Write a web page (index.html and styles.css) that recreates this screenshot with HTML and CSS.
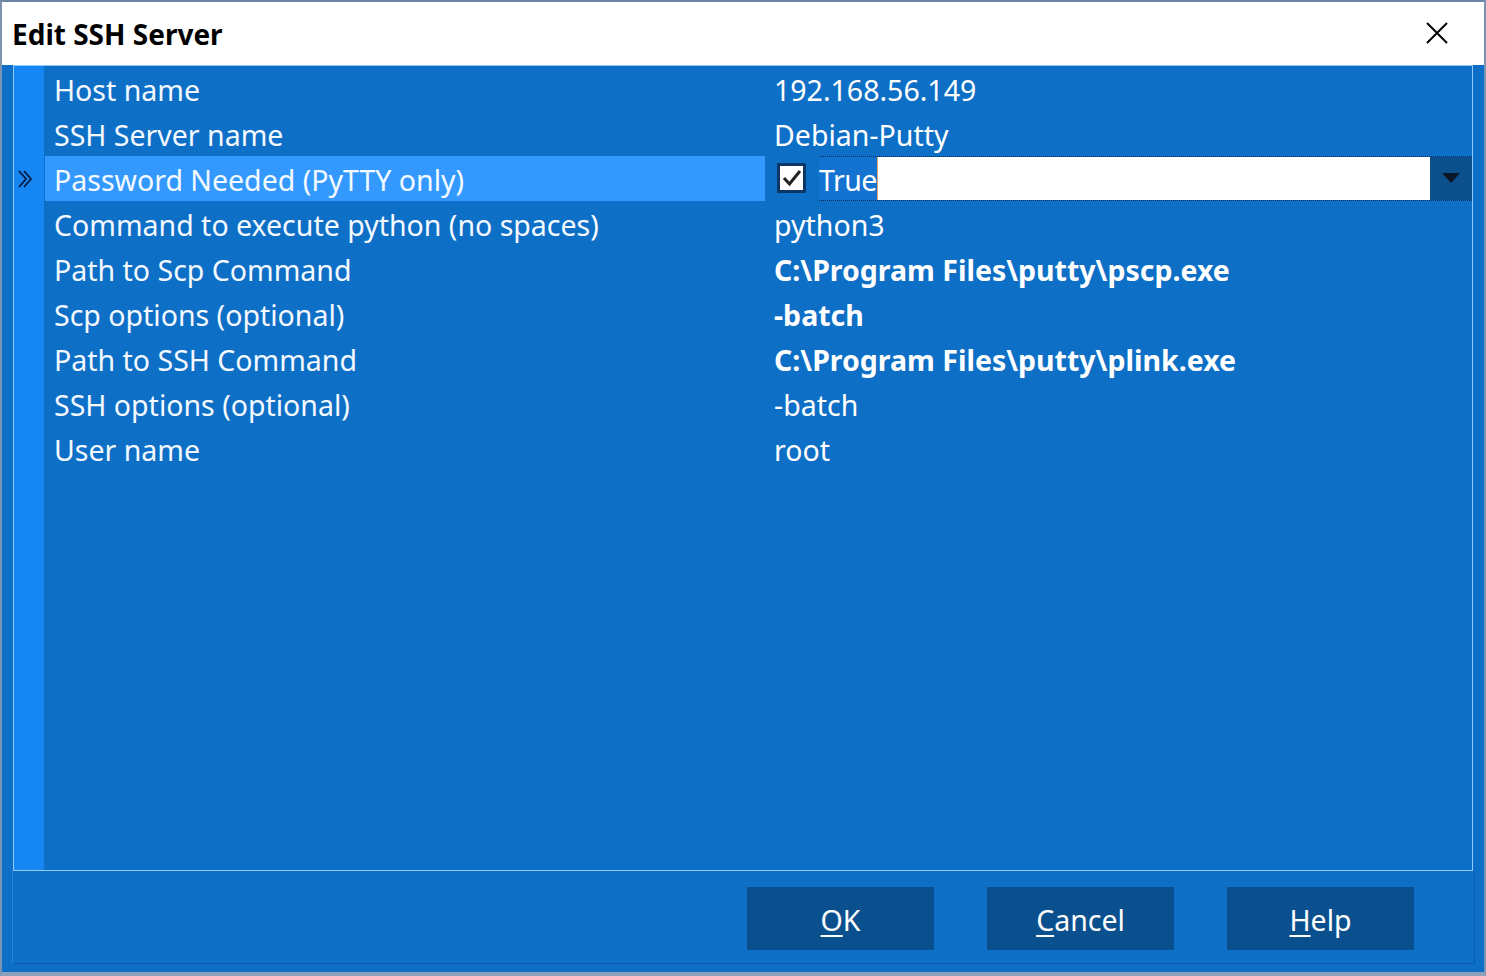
FILE: index.html
```html
<!DOCTYPE html>
<html lang="en">
<head>
<meta charset="utf-8">
<title>Edit SSH Server</title>
<link rel="stylesheet" href="styles.css">
</head>
<body>
<div class="window">
  <div class="titlebar">
    <h1 class="title">Edit SSH Server</h1>
    <button class="close" aria-label="Close">
      <svg width="22" height="22" viewBox="0 0 22 22"><path d="M1 1 L21 21 M21 1 L1 21" stroke="#000" stroke-width="2" fill="none"/></svg>
    </button>
  </div>
  <div class="body">
    <div class="grid">
      <div class="strip">
        <div class="strip-cell"></div>
        <div class="strip-cell"></div>
        <div class="strip-cell current">
          <svg width="16" height="18" viewBox="0 0 16 18"><path d="M1 1 L8 9 L1 17 M6 1 L13 9 L6 17" stroke="#081a3f" stroke-width="1.8" fill="none"/></svg>
        </div>
      </div>
      <div class="rows">
        <div class="row"><div class="label">Host name</div><div class="value">192.168.56.149</div></div>
        <div class="row"><div class="label">SSH Server name</div><div class="value">Debian-Putty</div></div>
        <div class="row selected">
          <div class="label">Password Needed (PyTTY only)</div>
          <div class="value editor-cell">
            <span class="checkbox">
              <svg width="22" height="22" viewBox="0 0 22 22"><path d="M3 11 L8.5 17 L19 4" stroke="#222" stroke-width="3" fill="none"/></svg>
            </span>
            <div class="editor">
              <span class="editor-text">True</span>
              <span class="editor-input"></span>
              <span class="editor-drop">
                <svg width="18" height="10" viewBox="0 0 18 10"><path d="M0 0 L18 0 L9 10 Z" fill="#0b1626"/></svg>
              </span>
            </div>
          </div>
        </div>
        <div class="row"><div class="label">Command to execute python (no spaces)</div><div class="value">python3</div></div>
        <div class="row"><div class="label">Path to Scp Command</div><div class="value bold">C:\Program Files\putty\pscp.exe</div></div>
        <div class="row"><div class="label">Scp options (optional)</div><div class="value bold">-batch</div></div>
        <div class="row"><div class="label">Path to SSH Command</div><div class="value bold">C:\Program Files\putty\plink.exe</div></div>
        <div class="row"><div class="label">SSH options (optional)</div><div class="value">-batch</div></div>
        <div class="row"><div class="label">User name</div><div class="value">root</div></div>
      </div>
    </div>
    <div class="footer">
      <button class="btn"><u>O</u>K</button>
      <button class="btn"><u>C</u>ancel</button>
      <button class="btn"><u>H</u>elp</button>
    </div>
  </div>
</div>
</body>
</html>
```
FILE: styles.css
```css
* { box-sizing: border-box; }
html, body { margin: 0; padding: 0; }
body {
  width: 1486px;
  height: 976px;
  overflow: hidden;
  background: #8a9fb8;
  font-family: "Noto Sans", "Open Sans", sans-serif;
}
.window {
  width: 1486px;
  height: 976px;
  border-top: 2px solid #6f87a6;
  border-left: 2px solid #7d93ae;
  border-right: 2px solid #7d93ae;
  border-bottom: 4px solid #8ca1bb;
  display: flex;
  flex-direction: column;
}
.titlebar {
  height: 63px;
  background: #ffffff;
  display: flex;
  align-items: center;
  justify-content: space-between;
  padding: 0 36px 0 10px;
}
.title {
  margin: 0;
  font-size: 28px;
  font-weight: 700;
  color: #000;
  letter-spacing: 0;
  padding-top: 0;
}
.close {
  background: none;
  border: 0;
  padding: 0;
  width: 22px;
  height: 22px;
  display: flex;
  margin-top: -1px;
}
.body {
  flex: 1;
  background: #0e6fc6;
  display: flex;
  flex-direction: column;
  padding: 0 9px 8px 10px;
}
.grid {
  height: 806px;
  margin-left: 1px;
  width: 1460px;
  border: 1px solid #8fcbff;
  display: flex;
}
.strip {
  width: 30px;
  background: #1586f2;
  display: flex;
  flex-direction: column;
}
.strip-cell { height: 45px; }
.strip-cell.current {
  display: flex;
  align-items: center;
  padding-left: 4px;
  padding-top: 0;
}
.rows {
  flex: 1;
  display: flex;
  flex-direction: column;
}
.row {
  height: 45px;
  display: flex;
  align-items: stretch;
}
.label {
  width: 720px;
  margin-left: 1px;
  padding-left: 9px;
  color: #f4f9ff;
  font-size: 28.5px;
  display: flex;
  align-items: center;
  padding-top: 2px;
  white-space: nowrap;
}
.value {
  flex: 1;
  padding-left: 9px;
  color: #ffffff;
  font-size: 28.5px;
  display: flex;
  align-items: center;
  padding-top: 2px;
  white-space: nowrap;
}
.value.bold { font-weight: 700; }
.row.selected .label { background: #3399ff; }
.editor-cell {
  padding-left: 12px;
  padding-top: 0;
  gap: 13px;
}
.checkbox {
  width: 29px;
  height: 30px;
  border: 3px solid #0a3766;
  background: #ffffff;
  display: flex;
  align-items: center;
  justify-content: center;
  margin-top: -2px;
}
.editor {
  flex: 1;
  height: 45px;
  border-top: 1px dotted #0a2b57;
  border-bottom: 1px dotted #0a2b57;
  display: flex;
  align-items: stretch;
}
.editor-text {
  flex: none;
  background: #1473d0;
  color: #ffffff;
  display: flex;
  align-items: center;
  padding-top: 3px;
  letter-spacing: -0.5px;
  border-right: 1px solid #d9a66b;
}
.editor-input {
  flex: 1;
  background: #ffffff;
}
.editor-drop {
  width: 42px;
  background: #0b4f8c;
  display: flex;
  align-items: center;
  justify-content: center;
  padding-bottom: 2px;
}
.footer {
  flex: 1;
  border-left: 1px solid #2a85d6;
  border-right: 1px solid #0a5cab;
  border-bottom: 1px solid #0a5cab;
  display: flex;
  justify-content: flex-end;
  align-items: flex-start;
  gap: 53px;
  padding: 16px 60px 0 0;
}
.btn {
  width: 187px;
  height: 63px;
  background: #0b508e;
  border: 0;
  color: #ffffff;
  font-family: "Noto Sans", "Open Sans", sans-serif;
  font-size: 28.5px;
  padding: 2px 0 0;
}
.btn u { text-underline-offset: 4px; text-decoration-thickness: 2px; }
```
